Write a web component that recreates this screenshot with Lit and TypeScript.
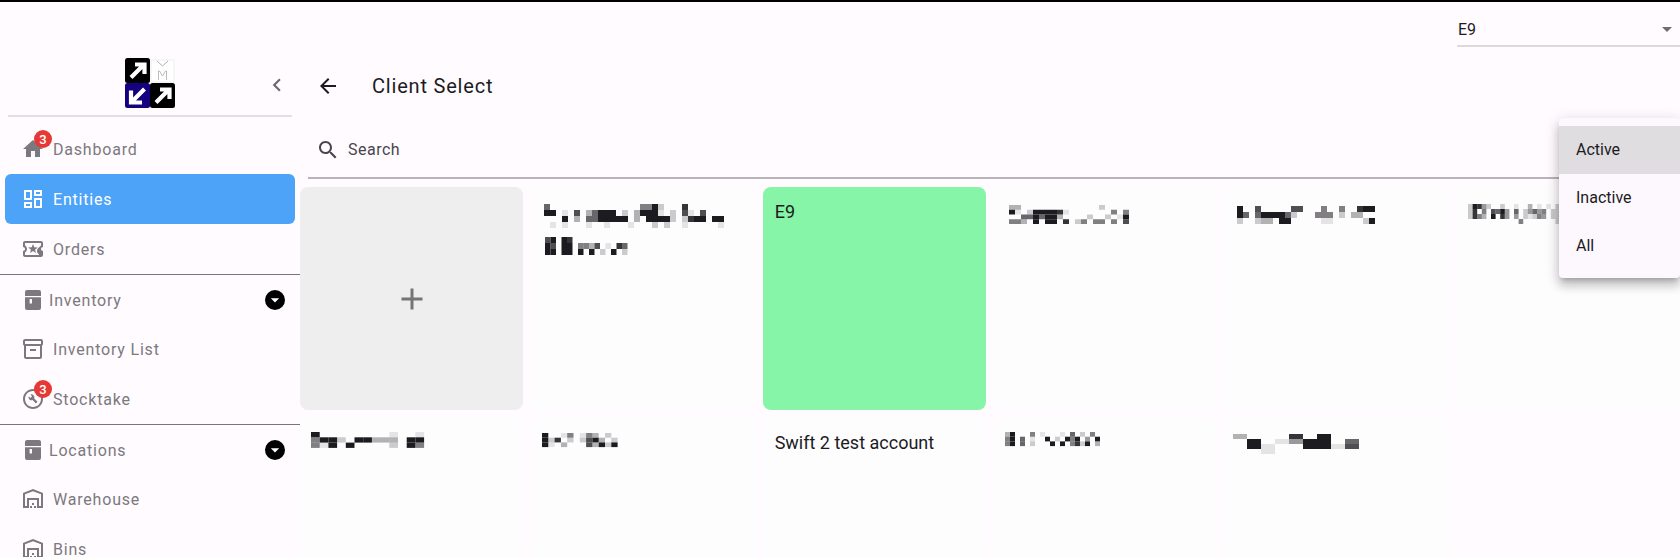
import { LitElement, html, css, svg } from "lit";
import { customElement } from "lit/decorators.js";

const P = {
  home: "M10 20v-6h4v6h5v-8h3L12 3 2 12h3v8z",
  dash: "M19 5v2h-4V5h4M9 5v6H5V5h4m10 8v6h-4v-6h4M9 17v2H5v-2h4M21 3h-8v6h8V3zM11 3H3v10h8V3zm10 8h-8v10h8V11zm-10 4H3v6h8v-6z",
  ticket: "M20 12c0-1.1.9-2 2-2V6c0-1.1-.9-2-2-2H4c-1.1 0-1.99.9-1.99 2v4c1.1 0 1.99.9 1.99 2s-.89 2-2 2v4c0 1.1.9 2 2 2h16c1.1 0 2-.9 2-2v-4c-1.1 0-2-.9-2-2zm-2-1.46c-1.19.69-2 1.99-2 3.46s.81 2.77 2 3.46V18H4v-2.54c1.19-.69 2-1.99 2-3.46 0-1.48-.8-2.77-1.99-3.46L4 6h16v2.54zM9.07 16 12 14.12 14.93 16l-.89-3.36 2.69-2.2-3.47-.21L12 7l-1.27 3.22-3.47.21 2.69 2.2z",
  group: "M6 2h12a2 2 0 0 1 2 2v4H4V4a2 2 0 0 1 2-2zM4 9.2h16V20a2 2 0 0 1-2 2H6a2 2 0 0 1-2-2zM8.6 11v4.6h2.4V11z",
  box: "M20 2H4c-1 0-2 .9-2 2v3.01c0 .72.43 1.34 1 1.69V20c0 1.1 1.1 2 2 2h14c.9 0 2-.9 2-2V8.7c.57-.35 1-.97 1-1.69V4c0-1.1-1-2-2-2zm-1 18H5V9h14v11zm1-13H4V4h16v3zM9 12h6v2H9z",
  stock: "M12 2C6.48 2 2 6.48 2 12s4.48 10 10 10 10-4.48 10-10S17.52 2 12 2zm0 18c-4.41 0-8-3.59-8-8s3.59-8 8-8 8 3.59 8 8-3.59 8-8 8zM9.3 7.6a3 3 0 0 1 3.9 3.9l3.3 3.3-1.6 1.6-3.3-3.3a3 3 0 0 1-3.9-3.9l1.7 1.7 1.6-1.6z",
  ware: "M20 7.35V19h-2v-8H6v8H4V7.35l8-3.2 8 3.2M22 21V6L12 2 2 6v15h6v-8h8v8h6zm-11-2H9v2h2v-2zm2-3h-2v2h2v-2zm2 3h-2v2h2v-2z",
  chev: "M15.41 7.41 14 6l-6 6 6 6 1.41-1.41L10.83 12z",
  back: "M20 11H7.83l5.59-5.59L12 4l-8 8 8 8 1.41-1.41L7.83 13H20v-2z",
  search: "M15.5 14h-.79l-.28-.27C15.41 12.59 16 11.11 16 9.5 16 5.91 13.09 3 9.5 3S3 5.91 3 9.5 5.91 16 9.5 16c1.61 0 3.09-.59 4.23-1.57l.27.28v.79l5 4.99L20.49 19l-4.99-5zm-6 0C7.01 14 5 11.99 5 9.5S7.01 5 9.5 5 14 7.01 14 9.5 11.99 14 9.5 14z",
  drop: "M7 10l5 5 5-5z",
  plus: "M19 13h-6v6h-2v-6H5v-2h6V5h2v6h6v2z",
};

const icon = (d: string, cls = "ic") =>
  html`<svg class=${cls} viewBox="0 0 24 24" fill="currentColor"><path fill-rule="evenodd" d=${d}></path></svg>`;

type Block = { x: number; y: number; cw: number; ch: number; rows: string[] };

const mosaic = (blocks: Block[]) =>
  html`<svg class="mosaic" width="224" height="80" aria-hidden="true">
    ${blocks.map((b) =>
      b.rows.map((r, j) =>
        [...r].map((c, i) =>
          c === "."
            ? null
            : svg`<rect x=${b.x + i * b.cw} y=${b.y + j * b.ch} width=${b.cw} height=${b.ch} fill="#1c1b1f" fill-opacity=${+c / 9}></rect>`
        )
      )
    )}
  </svg>`;

const CARDS: { name?: string; blocks?: Block[]; cls?: string }[] = [
  { cls: "add" },
  {
    blocks: [
      { x: 13, y: 17, cw: 6, ch: 6, rows: ["6...............5592...8....", "99.1.7.36999.2.39991.2.71.7", "...9.3.6699999.3.99992.2899.99", ".1.1...1..1...1...2.2..1.....1"] },
      { x: 14, y: 50, cw: 5.5, ch: 6, rows: ["79.98..........", "97.99.5537.1.86", "99.99.9.9.2.9.2"] },
    ],
  },
  { name: "E9", cls: "sel" },
  {
    blocks: [{ x: 15, y: 18, cw: 6, ch: 4.75, rows: ["33.............2....", "91.2999981.......5.5", "..6696993....2..2.19", "553.9.99.8.25.55.5.7"] }],
  },
  {
    blocks: [{ x: 12, y: 19, cw: 6, ch: 6, rows: ["9..7.....77...5..5..899", "96.6999962...555.2.33.", "2..233.99.....11.....29"] }],
  },
  {
    blocks: [{ x: 11, y: 17, cw: 4.6, ch: 5, rows: ["29842..2..1..3.1.1.2", "28.5.7694.6.24645.22", "2853.9.84.4.21254.22", "...........5.......2"] }],
  },
  {
    blocks: [{ x: 11, y: 14, cw: 8.7, ch: 5.3, rows: ["9........1..1", "5992.99333.99", "519.9....2.95"] }],
  },
  {
    blocks: [{ x: 11, y: 15, cw: 6.3, ch: 4.7, rows: ["9..15.153.2..", "928.2.2793.2.", "91.3...73929."] }],
  },
  { name: "Swift 2 test account" },
  {
    blocks: [{ x: 11, y: 14, cw: 5, ch: 4.7, rows: ["39...5.1...1.6.2.5", "59.6.1..9.2.959.4.9", "59.6.2...9.9.5829.3"] }],
  },
  {
    blocks: [{ x: 8, y: 16, cw: 14, ch: 5, rows: ["3...8.9..", ".9.1499.6", ".91..9917", "..1......"] }],
  },
];

const NAV = [
  { label: "Dashboard", d: P.home, badge: 3 },
  { label: "Entities", d: P.dash, active: true },
  { label: "Orders", d: P.ticket, last: true },
  { label: "Inventory", d: P.group, group: true },
  { label: "Inventory List", d: P.box },
  { label: "Stocktake", d: P.stock, badge: 3, last: true },
  { label: "Locations", d: P.group, group: true },
  { label: "Warehouse", d: P.ware },
  { label: "Bins", d: P.ware },
];

@customElement("app-root")
export class AppRoot extends LitElement {
  static styles = css`
    :host {
      display: block;
      position: relative;
      height: 557px;
      overflow: hidden;
      background: #fffbff;
      border-top: 2px solid #000;
      box-sizing: border-box;
      font-family: Roboto, sans-serif;
      color: #1c1b1f;
    }
    .top { display: flex; justify-content: flex-end; height: 46px; }
    .select {
      width: 223px; height: 45px; box-sizing: border-box;
      border-bottom: 2px solid #dcd9dc;
      display: flex; align-items: center; justify-content: space-between;
      font-size: 16px; padding: 11px 0 0 1px; color: #1c1b1f;
    }
    .select .ic { color: #6f6c70; margin-right: 1px; }
    .body { display: flex; }
    .side { width: 300px; flex: none; }
    .ic { width: 24px; height: 24px; flex: none; display: block; }
    .brand { display: flex; justify-content: center; position: relative; padding: 10px 0 7px; width: 300px; }
    .logo { display: block; }
    .collapse { position: absolute; left: 264px; top: 24px; width: 26px; height: 26px; color: #6d6a6f; }
    .rule { height: 2px; margin: 0 8px; background: #e3dfe5; }
    nav { padding-top: 7px; }
    .row {
      position: relative; height: 50px; display: flex; align-items: center;
      padding-left: 21px; gap: 8px; color: #7b797d; font-size: 16px; letter-spacing: .8px;
    }
    .row.active { margin: 0 5px; padding-left: 16px; background: #4da3f7; color: #fff; border-radius: 6px; }
    .row.group { height: 49px; gap: 4px; }
    .row.group > span:first-of-type { padding-top: 2px; }
    .row.last { border-bottom: 1px solid #79747e; }
    .badge {
      position: absolute; left: 34px; top: 6px; width: 18px; height: 18px; border-radius: 50%;
      background: #e53935; color: #fff; font-size: 13px; font-weight: 500; letter-spacing: 0;
      display: flex; align-items: center; justify-content: center;
    }
    .more {
      margin-left: auto; margin-right: 15px; width: 20px; height: 20px; border-radius: 50%;
      background: #000; color: #fff; display: flex; align-items: center; justify-content: center;
    }
    .more .ic { width: 20px; height: 20px; }
    main { flex: 1; min-width: 0; }
    header { display: flex; align-items: center; height: 50px; padding: 13px 0 0 16px; gap: 32px; }
    h1 { margin: 0; font-size: 20px; font-weight: 400; letter-spacing: .8px; }
    .search {
      margin: 11px 0 0 8px; height: 57px; box-sizing: border-box; border-bottom: 2px solid #b8b3ba;
      display: flex; align-items: center; padding: 0 0 0 8px; gap: 8px;
      color: #49454f; font-size: 16px; letter-spacing: .5px;
    }
    .search .ic { color: #49454f; }
    .grid {
      display: grid; grid-template-columns: repeat(6, 1fr); gap: 8px; margin-top: 8px;
    }
    .card {
      aspect-ratio: 1; background: #fefdfe; border-radius: 8px; font-size: 18px; overflow: hidden;
      box-sizing: border-box;
    }
    .card .name { padding: 13px 12px; line-height: 24px; }
    .card.add { background: #eeeeee; display: flex; align-items: center; justify-content: center; color: #757575; }
    .card.add .ic { width: 36px; height: 36px; }
    .card.sel { background: #86f5a8; }
    .mosaic { display: block; }
    .menu {
      position: absolute; left: 1559px; top: 116px; width: 121px; padding: 8px 0; box-sizing: border-box;
      background: #fdf8fd; border-radius: 4px;
      box-shadow: 0 5px 5px -3px rgba(0,0,0,.2), 0 8px 10px 1px rgba(0,0,0,.14), 0 3px 14px 2px rgba(0,0,0,.12);
    }
    .item { height: 48px; box-sizing: border-box; display: flex; align-items: center; padding: 0 0 2px 17px; font-size: 16px; color: #1c1b1f; }
    .item.on { background: #e0dde0; }
    .a { fill: none; stroke: #fff; stroke-width: 4.2; }
  `;

  private logo() {
    const up = "M6 19.5L18 7.5M10 6.5h9.5V16";
    const down = "M19.5 6L7.5 18M6 7.5v12h11";
    return html`<svg class="logo" width="50" height="50" viewBox="0 0 50 50">
      <rect width="25" height="25" rx="2.5" fill="#000"></rect>
      <path class="a" d=${up}></path>
      <rect x="26" y="2" width="23" height="22" fill="#fff" stroke="#eeeeee"></rect>
      <path d="M32 3l5.5 5 5.5-5" fill="none" stroke="#999" stroke-width=".8"></path>
      <path d="M33.5 22v-9h1l3 5 3-5h1v9" fill="none" stroke="#aaa" stroke-width=".8"></path>
      <rect y="25" width="25" height="25" rx="2.5" fill="#15007f"></rect>
      <path class="a" d=${down} transform="translate(0 25)"></path>
      <rect x="25" y="25" width="25" height="25" rx="2.5" fill="#000"></rect>
      <path class="a" d=${up} transform="translate(25 25)"></path>
    </svg>`;
  }

  render() {
    return html`
      <div class="top">
        <div class="select"><span>E9</span>${icon(P.drop)}</div>
      </div>
      <div class="body">
        <aside class="side">
          <div class="brand">${this.logo()}${icon(P.chev, "ic collapse")}</div>
          <div class="rule"></div>
          <nav>
            ${NAV.map(
              (n) => html`<div class="row ${n.active ? "active" : ""} ${n.group ? "group" : ""} ${n.last ? "last" : ""}">
                ${icon(n.d)}<span>${n.label}</span>
                ${n.badge ? html`<span class="badge">${n.badge}</span>` : null}
                ${n.group ? html`<span class="more">${icon(P.drop)}</span>` : null}
              </div>`
            )}
          </nav>
        </aside>
        <main>
          <header>${icon(P.back)}<h1>Client Select</h1></header>
          <div class="search">${icon(P.search)}<span>Search</span></div>
          <div class="grid">
            ${CARDS.map(
              (c) => html`<div class="card ${c.cls ?? ""}">
                ${c.cls === "add" ? icon(P.plus) : null}
                ${c.name ? html`<div class="name">${c.name}</div>` : null}
                ${c.blocks ? mosaic(c.blocks) : null}
              </div>`
            )}
          </div>
        </main>
      </div>
      <div class="menu">
        <div class="item on">Active</div>
        <div class="item">Inactive</div>
        <div class="item">All</div>
      </div>
    `;
  }
}
